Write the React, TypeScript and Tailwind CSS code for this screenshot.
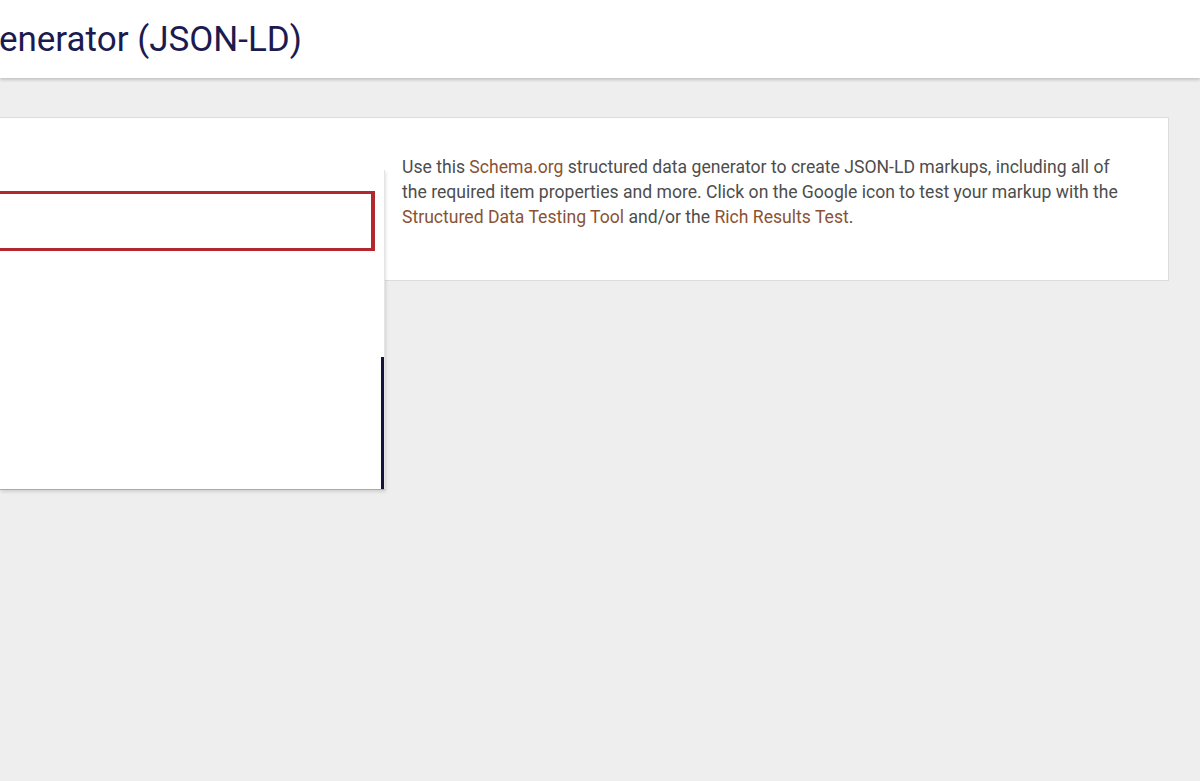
export default function App() {
  return (
    <div className="relative min-h-screen overflow-hidden bg-[#eeeeee] font-['Roboto',sans-serif]">
      <header className="relative z-10 h-[78px] bg-white shadow-[0_2px_3px_rgba(0,0,0,0.18)]">
        <div className="flex w-[302px] justify-end pt-[16px]">
          <h1 className="whitespace-nowrap text-[35px] leading-[48px] font-normal text-[#1b1b50]">
            Schema Markup Generator (JSON-LD)
          </h1>
        </div>
      </header>

      <main className="relative pt-[39px] pr-[31px]">
        <section className="flex h-[164px] border border-l-0 border-[#dcdcdc] bg-white">
          <div className="w-[402px] shrink-0" />
          <p className="w-[728px] pt-[37px] text-[17.6px] leading-[25px] text-[#4d4d4d]">
            Use this <a className="text-[#8a5234]">Schema.org</a> structured data generator to create JSON-LD markups,
            including all of the required item properties and more. Click on the Google icon to test your markup with
            the <a className="text-[#8a5234]">Structured Data Testing Tool</a> and/or the{" "}
            <a className="text-[#8a5234]">Rich Results Test</a>.
          </p>
        </section>

        {/* dropdown panel overlaying the card */}
        <div className="absolute left-0 top-[92px] flex h-[320px] w-[385px] border-r border-b border-r-[#e4e4e4] border-b-[#a9a9a9] bg-white shadow-[1px_2px_3px_rgba(0,0,0,0.12)]">
          <div className="flex flex-1 flex-col pt-[21px] pr-[9px]">
            <div className="h-[60px] border-[3px] border-r-4 border-l-0 border-[#b3282e] bg-white" />
          </div>
          <div className="absolute right-0 bottom-0 h-[132px] w-[3px] bg-[#15143a]" />
        </div>
      </main>
    </div>
  );
}
